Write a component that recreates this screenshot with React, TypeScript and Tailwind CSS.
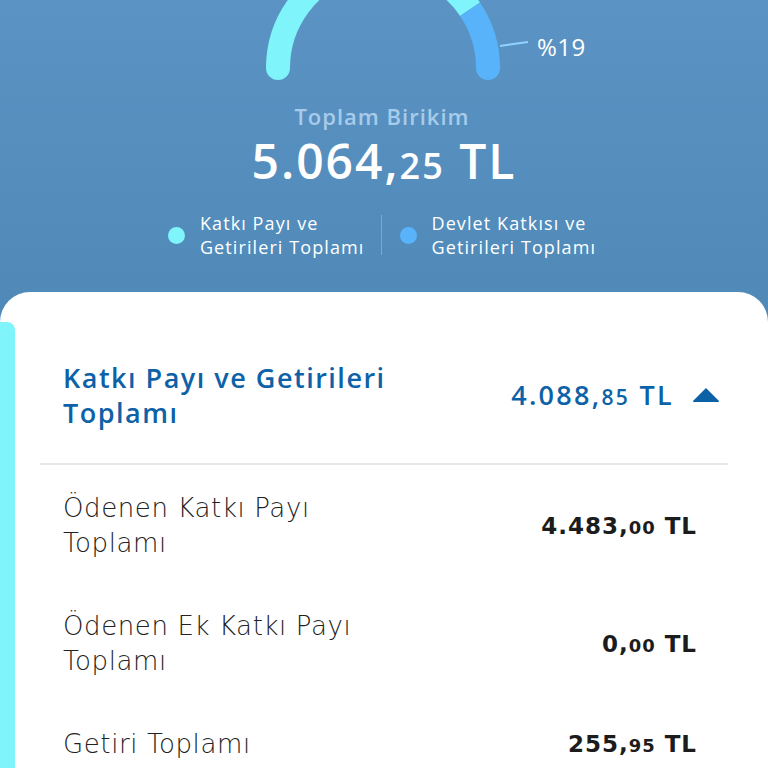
import React from 'react'

const font = { fontFamily: '"Open Sans", "Noto Sans", sans-serif' }
const wide = { fontFamily: '"DejaVu Sans", "Noto Sans", sans-serif' }

const Amount = ({ whole, cents, className }: { whole: string; cents: string; className?: string }) => (
  <span className={className}>
    {whole},<span className="text-[0.78em]">{cents}</span> TL
  </span>
)

const Gauge = () => {
  const cx = 383
  const cy = 68
  const r = 105
  const a = (34 * Math.PI) / 180
  const jx = cx + r * Math.cos(a)
  const jy = cy - r * Math.sin(a)
  return (
    <svg width="768" height="96" viewBox="0 0 768 96" className="block">
      <path d={`M ${cx - r} ${cy} A ${r} ${r} 0 0 1 ${jx} ${jy}`} stroke="#80f4fb" strokeWidth="24" fill="none" />
      <path d={`M ${jx} ${jy} A ${r} ${r} 0 0 1 ${cx + r} ${cy}`} stroke="#58b3fb" strokeWidth="24" fill="none" />
      <circle cx={cx - r} cy={cy} r="12" fill="#80f4fb" />
      <circle cx={cx + r} cy={cy} r="12" fill="#58b3fb" />
      <path d="M 500 46 L 528 42" stroke="#8fd2ff" strokeWidth="2" fill="none" />
      <text x="537" y="56" fill="#ffffff" fontSize="24" letterSpacing="0.5" style={font}>%19</text>
    </svg>
  )
}

const Row = ({ label, value }: { label: React.ReactNode; value: React.ReactNode }) => (
  <div className="flex items-center justify-between pl-[63px] pr-[71px]" style={wide}>
    <div className="text-[26px] leading-[35px] font-extralight text-[#222] tracking-[0.6px]">{label}</div>
    <div className="text-[23px] font-bold text-[#1c1c1c] tracking-[1px]">{value}</div>
  </div>
)

export default function App() {
  return (
    <div className="w-[768px] h-[768px] overflow-hidden bg-gradient-to-b from-[#5b94c4] to-[#3f7aa7]" style={font}>
      <div className="h-[292px] flex flex-col items-center">
        <Gauge />
        <div className="mt-[6px] text-[22px] font-semibold text-[#a8cbea] leading-[28px] tracking-[1px] ml-[-4px]">Toplam Birikim</div>
        <div className="mt-[3px] text-[48px] font-semibold text-white leading-[56px] tracking-[2px]">
          5.064,<span className="text-[36px]">25</span> TL
        </div>
        <div className="mt-[17px] flex items-center">
          <div className="flex items-center gap-[15px] pr-[16px] -ml-[4px]">
            <span className="w-[17px] h-[17px] rounded-full bg-[#80f4fb]" />
            <span className="text-[18px] leading-[24px] text-white tracking-[1.1px]">Katkı Payı ve<br />Getirileri Toplamı</span>
          </div>
          <div className="w-px h-[40px] bg-[#7ea9cd]" />
          <div className="flex items-center gap-[15px] pl-[18px]">
            <span className="w-[17px] h-[17px] rounded-full bg-[#58b3fb]" />
            <span className="text-[18px] leading-[24px] text-white tracking-[1.1px]">Devlet Katkısı ve<br />Getirileri Toplamı</span>
          </div>
        </div>
      </div>
      <div className="bg-white rounded-t-[30px] h-[476px] pt-[30px]">
        <div className="flex h-full">
          <div className="w-[15px] bg-[#80f4fb] rounded-tr-[8px] shrink-0" />
          <div className="flex-1 -ml-[15px]">
            <div className="flex items-center justify-between pl-[63px] pr-[48px] pt-[38px] pb-[33px]">
              <div className="text-[27px] font-semibold leading-[35px] text-[#0d62a7] tracking-[1.5px]">
                Katkı Payı ve Getirileri<br />Toplamı
              </div>
              <div className="flex items-center gap-[18px] text-[#0d62a7]">
                <Amount whole="4.088" cents="85" className="text-[27px] font-semibold tracking-[2.3px]" />
                <svg width="28" height="16" viewBox="0 0 28 16">
                  <path d="M14 1 L27 14 Q27.5 15 26 15 L2 15 Q0.5 15 1 14 Z" fill="#0d62a7" />
                </svg>
              </div>
            </div>
            <div className="mx-[40px] h-[2px] bg-[#e8e8e8]" />
            <div className="pt-[26px] flex flex-col gap-[48px]">
              <Row label={<>Ödenen Katkı Payı<br />Toplamı</>} value={<Amount whole="4.483" cents="00" />} />
              <Row label={<>Ödenen Ek Katkı Payı<br />Toplamı</>} value={<Amount whole="0" cents="00" />} />
              <Row label="Getiri Toplamı" value={<Amount whole="255" cents="95" />} />
            </div>
          </div>
        </div>
      </div>
    </div>
  )
}
